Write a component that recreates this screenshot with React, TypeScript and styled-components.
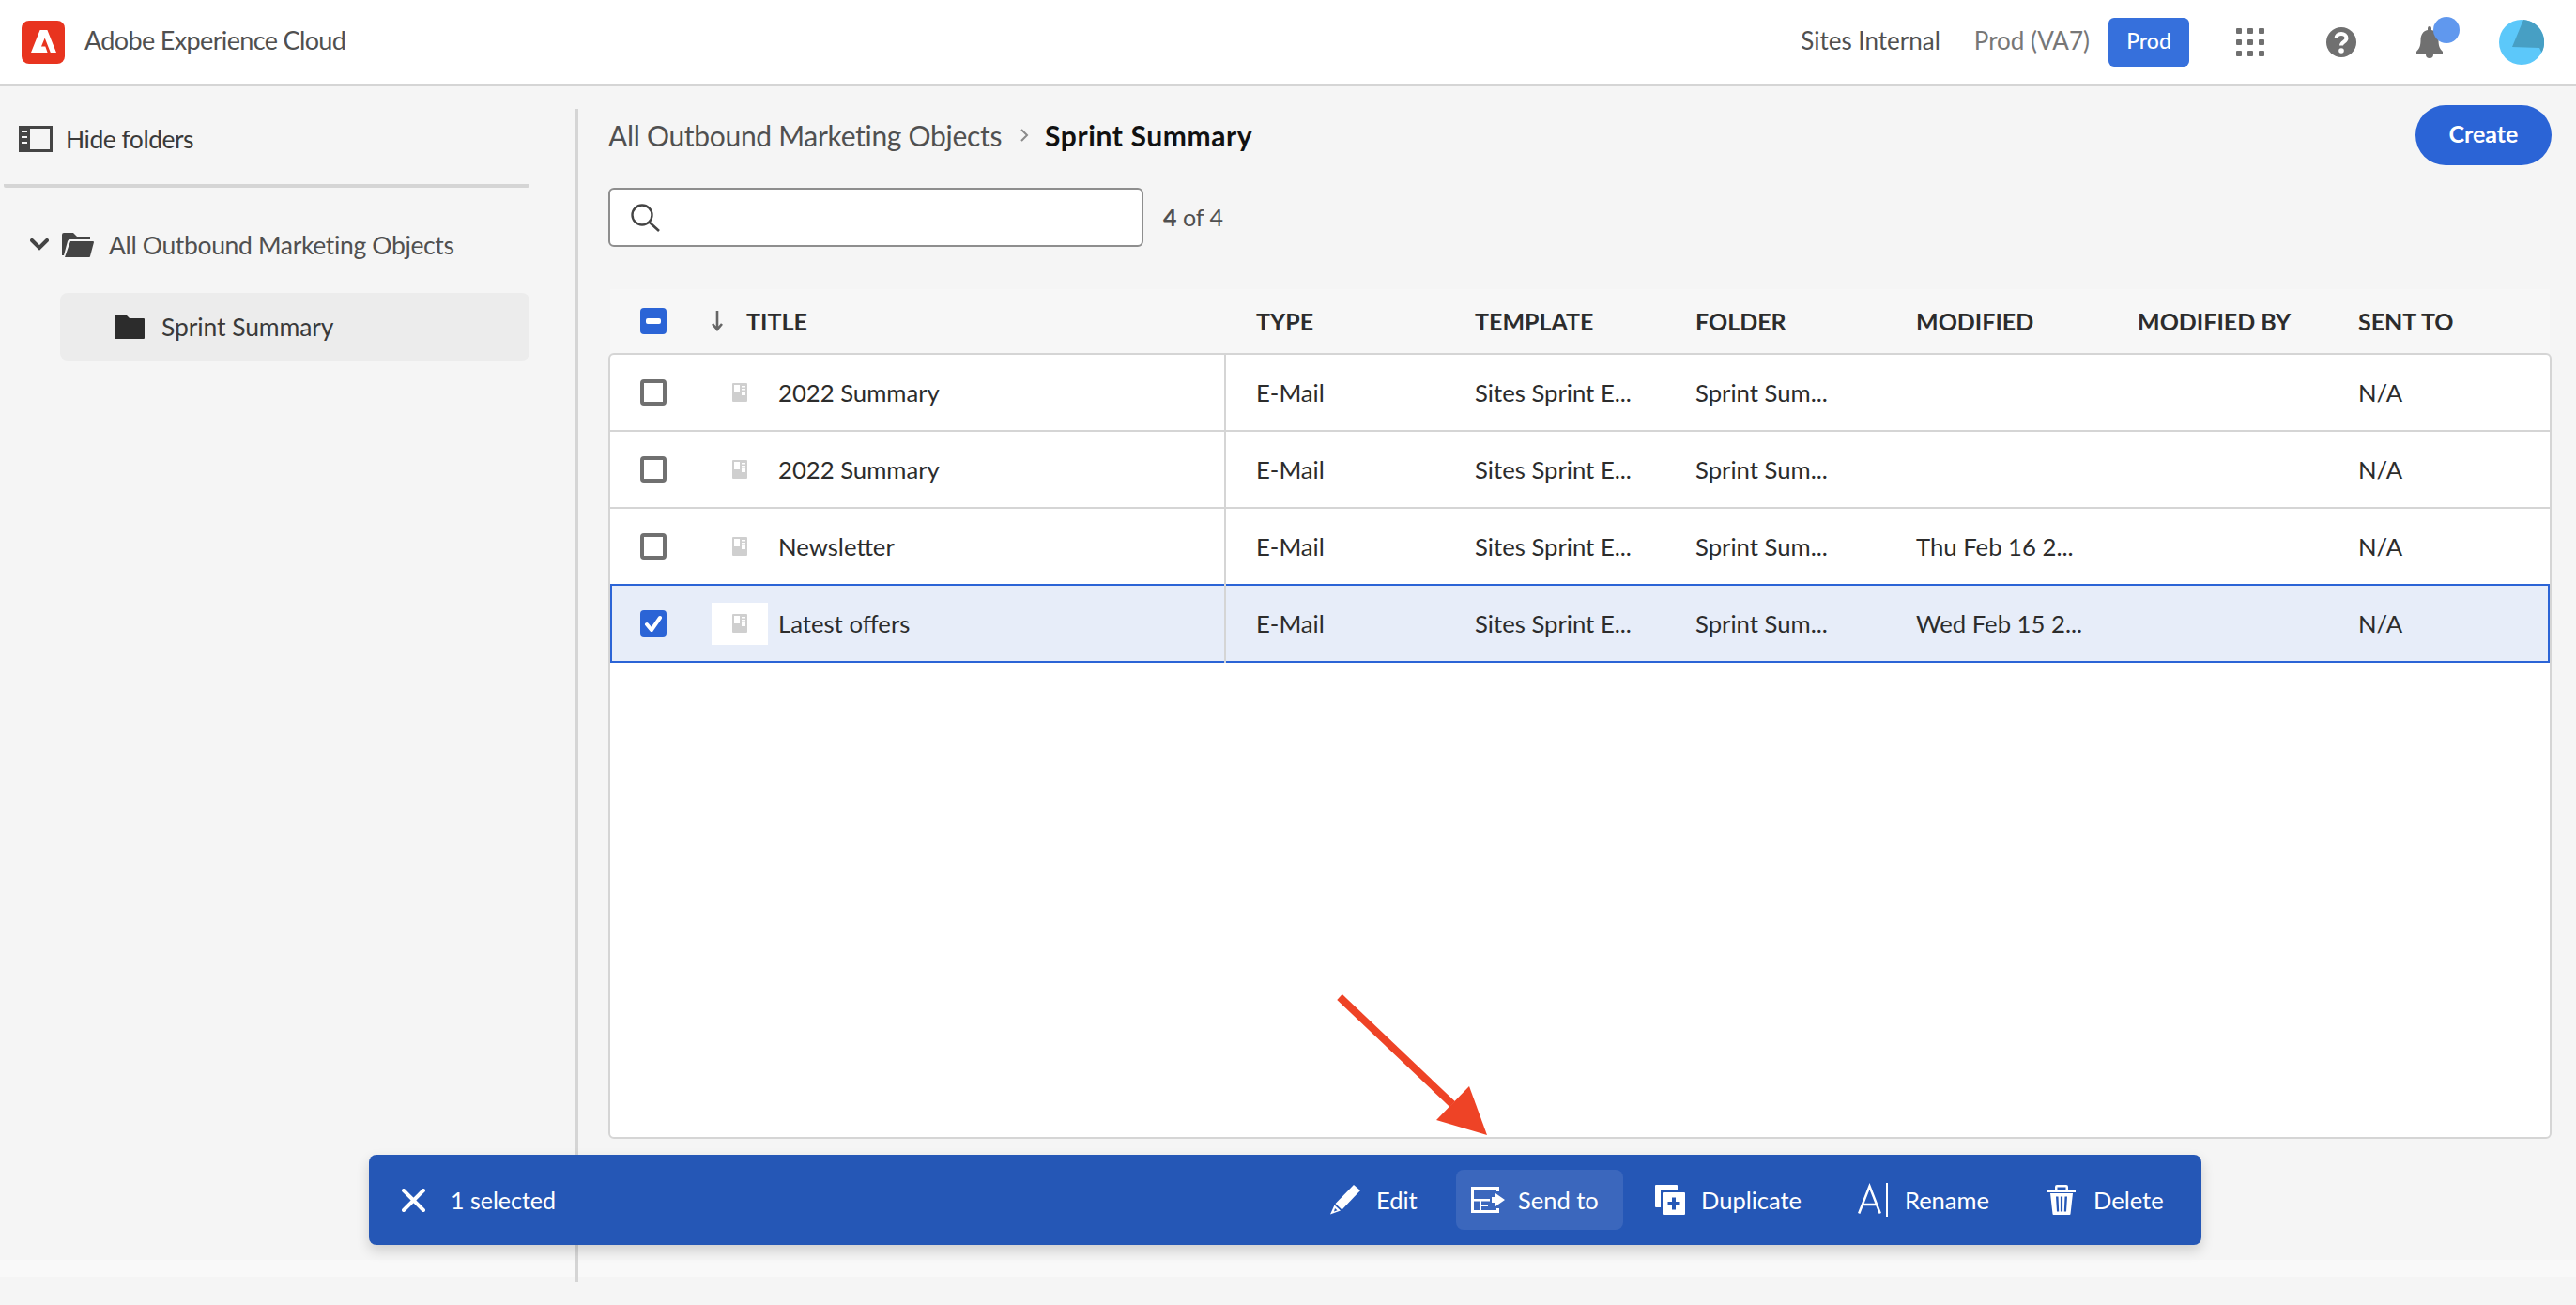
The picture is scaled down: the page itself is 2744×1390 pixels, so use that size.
import styled, { createGlobalStyle } from "styled-components";

const Global = createGlobalStyle`
  html, body { margin: 0; padding: 0; }
  body { font-family: "Lato", "Noto Sans", sans-serif; color: #2c2c2c; }
  * { box-sizing: border-box; }
`;

const Page = styled.div`
  position: relative;
  width: 2744px;
  height: 1390px;
  overflow: hidden;
  display: flex;
  flex-direction: column;
  background: linear-gradient(
    to bottom,
    #f5f5f5 1342px,
    #f9f9f9 1342px,
    #f9f9f9 1360px,
    #f5f5f5 1360px
  );
`;

const Header = styled.header`
  display: flex;
  align-items: center;
  height: 92px;
  flex: none;
  background: #fff;
  border-bottom: 2px solid #d5d5d5;
  padding: 0 34px 0 23px;
`;

const Logo = styled.div`
  width: 46px;
  height: 46px;
  border-radius: 8px;
  background: #e8341f;
  display: flex;
  align-items: center;
  justify-content: center;
  margin-right: 21px;
  padding-bottom: 2px;
`;

const Brand = styled.span`
  font-size: 27px;
  letter-spacing: -0.65px;
  color: #505050;
  flex: 1;
  padding-bottom: 5px;
`;

const HeaderText = styled.span<{ $muted?: boolean }>`
  font-size: 26px;
  color: ${(p) => (p.$muted ? "#777" : "#505050")};
  margin-right: ${(p) => (p.$muted ? "20px" : "36px")};
  padding-bottom: 5px;
`;

const ProdBadge = styled.div`
  width: 86px;
  height: 52px;
  border-radius: 6px;
  background: #3670dc;
  color: #fff;
  font-size: 23px;
  font-weight: 500;
  display: flex;
  align-items: center;
  justify-content: center;
  margin-right: 50px;
  padding-bottom: 4px;
`;

const HeaderIcons = styled.div`
  display: flex;
  align-items: center;
`;

const IconSlot = styled.div<{ $w: number; $mr: number }>`
  position: relative;
  width: ${(p) => p.$w}px;
  margin-right: ${(p) => p.$mr}px;
  display: flex;
  align-items: center;
`;

const Dot = styled.div`
  position: absolute;
  left: 18px;
  top: -10px;
  width: 28px;
  height: 28px;
  border-radius: 50%;
  background: #6098ee;
`;

const Body = styled.div`
  flex: 1;
  display: flex;
  padding-top: 24px;
  padding-bottom: 24px;
`;

const Sidebar = styled.aside`
  width: 612px;
  flex: none;
  padding-left: 4px;
  font-size: 26.5px;
  letter-spacing: -0.3px;
`;

const HideRow = styled.div`
  width: 560px;
  height: 84px;
  display: flex;
  align-items: center;
  gap: 14px;
  padding: 0 0 16px 16px;
  border-bottom: 4px solid #d5d5d5;
  border-radius: 0 0 2px 2px;
  letter-spacing: -0.5px;
  color: #3a3a3a;
`;

const TreeRoot = styled.div`
  display: flex;
  align-items: center;
  height: 72px;
  margin-top: 25px;
  padding-left: 28px;
  letter-spacing: -0.35px;
  color: #505050;
`;

const Chevron = styled.svg`
  margin-right: 14px;
`;

const OpenFolder = styled.svg`
  margin-right: 16px;
`;

const TreeChild = styled.div`
  display: flex;
  align-items: center;
  width: 500px;
  height: 72px;
  margin: 15px 0 0 60px;
  padding-left: 58px;
  gap: 18px;
  background: #ececec;
  border-radius: 8px;
  letter-spacing: -0.1px;
  color: #3a3a3a;
`;

const Main = styled.main`
  flex: 1;
  border-left: 4px solid #d5d5d5;
  padding-left: 32px;
  padding-right: 26px;
  display: flex;
  flex-direction: column;
`;

const TitleBar = styled.div`
  display: flex;
  align-items: center;
  height: 64px;
  font-size: 30px;
  margin-top: -4px;
`;

const Crumb = styled.span`
  color: #505050;
  letter-spacing: -0.3px;
`;

const CrumbSep = styled.svg`
  margin: 0 17px 0 19px;
`;

const CrumbBold = styled.span`
  color: #111;
  font-weight: 700;
  letter-spacing: 0.6px;
  flex: 1;
`;

const CreateButton = styled.button`
  width: 145px;
  height: 64px;
  border: 0;
  border-radius: 32px;
  background: #2b64d6;
  color: #fff;
  padding: 0 0 4px;
  font: 700 25px "Lato", sans-serif;
`;

const SearchRow = styled.div`
  display: flex;
  align-items: center;
  margin-top: 24px;
  gap: 21px;
`;

const SearchBox = styled.div`
  width: 570px;
  height: 63px;
  background: #fff;
  border: 2px solid #8e8e8e;
  border-radius: 6px;
  display: flex;
  align-items: center;
  padding-left: 22px;
`;

const Count = styled.span`
  font-size: 25px;
  color: #505050;
  padding-bottom: 2px;
  b {
    font-weight: 700;
  }
`;

const COLUMNS = "108px 580px 233px 235px 235px 236px 235px 1fr";

const HeadRow = styled.div`
  display: grid;
  grid-template-columns: ${COLUMNS};
  align-items: center;
  height: 68px;
  margin: 45px 2px 0;
  background: #f7f7f7;
  font-size: 25px;
  font-weight: 700;
  color: #2c2c2c;
`;

const TableCard = styled.div`
  height: 837px;
  background: #fff;
  border: 2px solid #d5d5d5;
  border-radius: 6px;
`;

const Row = styled.div<{ $selected?: boolean }>`
  display: grid;
  grid-template-columns: ${COLUMNS};
  align-items: stretch;
  font-size: 25.7px;
  color: #2c2c2c;
  height: 82px;
  border-bottom: 2px solid #d5d5d5;
  ${(p) =>
    p.$selected &&
    `
    height: 84px;
    margin-top: -2px;
    border-bottom: 0;
    background: #e7edf9;
    box-shadow: inset 0 0 0 2px #2b64d6;
  `}
`;

const Cell = styled.div`
  display: flex;
  align-items: center;
  white-space: nowrap;
`;

const CheckCell = styled(Cell)`
  padding-left: 32px;
`;

const TitleCell = styled(Cell)`
  border-right: 2px solid #d5d5d5;
  margin-right: 32px;
`;

const Thumb = styled.div<{ $white?: boolean }>`
  width: 60px;
  height: 45px;
  margin-right: 11px;
  display: flex;
  align-items: center;
  justify-content: center;
  background: ${(p) => (p.$white ? "#fff" : "transparent")};
`;

const HeadSort = styled.div`
  display: flex;
  align-items: center;
  gap: 25px;
`;

const Checkbox = styled.div<{ $on?: boolean }>`
  width: 28px;
  height: 28px;
  border-radius: 4px;
  display: flex;
  align-items: center;
  justify-content: center;
  background: ${(p) => (p.$on ? "#2b64d6" : "#fff")};
  border: ${(p) => (p.$on ? "0" : "4px solid #707070")};
`;

const ActionBar = styled.div`
  position: absolute;
  left: 393px;
  top: 1230px;
  width: 1952px;
  height: 96px;
  display: flex;
  align-items: center;
  background: #2557b6;
  border-radius: 8px;
  box-shadow: 0 6px 14px rgba(0, 0, 0, 0.16);
  color: #fff;
  font-size: 25.5px;
  padding: 0 20px 0 35px;
`;

const Selected = styled.span`
  margin-left: 27px;
  flex: 1;
  font-size: 25px;
`;

const Action = styled.div<{ $active?: boolean; $w: number; $gap?: number; $ml?: number }>`
  width: ${(p) => p.$w}px;
  height: 64px;
  margin-left: ${(p) => p.$ml ?? 0}px;
  display: flex;
  align-items: center;
  gap: ${(p) => p.$gap ?? 17}px;
  padding-left: 16px;
  border-radius: 8px;
  background: ${(p) => (p.$active ? "#3b67bd" : "transparent")};
`;

const Arrow = styled.svg`
  position: absolute;
  left: 1420px;
  top: 1055px;
`;

const rows = [
  { title: "2022 Summary", modified: "" },
  { title: "2022 Summary", modified: "" },
  { title: "Newsletter", modified: "Thu Feb 16 2..." },
  { title: "Latest offers", modified: "Wed Feb 15 2...", selected: true },
];

const ThumbIcon = () => (
  <svg width="16" height="20" viewBox="0 0 16 20">
    <path
      fill="#cfcfcf"
      fillRule="evenodd"
      d="M1 0h14a1 1 0 0 1 1 1v18a1 1 0 0 1-1 1H1a1 1 0 0 1-1-1V1a1 1 0 0 1 1-1zM2 2v8h6V2zm8 1v1.400h4V3zm0 3v1.400h4V6zm0 3v4h4V9z"
    />
  </svg>
);

export default function App() {
  return (
    <Page>
      <Global />
      <Header>
        <Logo>
          <svg width="27" height="24" viewBox="0 0 27 24">
            <path fill="#fff" d="M9.600 0h7.800L27 24h-6.200L14.700 8.500 11 17.500h4.300l2.300 6.500H0z" />
          </svg>
        </Logo>
        <Brand>Adobe Experience Cloud</Brand>
        <HeaderText>Sites Internal</HeaderText>
        <HeaderText $muted>Prod (VA7)</HeaderText>
        <ProdBadge>Prod</ProdBadge>
        <HeaderIcons>
          <IconSlot $w={30} $mr={66}>
            <svg width="30" height="30" viewBox="0 0 30 30" fill="#707070">
              {[0, 12, 24].flatMap((y) =>
                [0, 12, 24].map((x) => <rect key={`${x}-${y}`} x={x} y={y} width="6" height="6" rx="1" />)
              )}
            </svg>
          </IconSlot>
          <IconSlot $w={32} $mr={64}>
            <svg width="32" height="32" viewBox="0 0 32 32">
              <circle cx="16" cy="16" r="16" fill="#707070" />
              <path fill="none" stroke="#fff" strokeWidth="4" d="M10.500 12c0-3.300 2.500-5 5.500-5s5.500 1.800 5.500 4.800c0 3.800-5.500 3.700-5.500 7.700" />
              <circle cx="16" cy="25" r="2.800" fill="#fff" />
            </svg>
          </IconSlot>
          <IconSlot $w={28} $mr={60}>
            <svg width="28" height="34" viewBox="0 0 28 34" fill="#707070">
              <path d="M12 2a2 2 0 0 1 4 0v2c5 1 7.500 5 7.500 11 0 6 1.500 9 4.500 12v2H0v-2c3-3 4.500-6 4.500-12 0-6 2.500-10 7.500-11z" />
              <path d="M10 30h8a4 4 0 0 1-8 0z" />
            </svg>
            <Dot />
          </IconSlot>
          <svg width="48" height="48" viewBox="0 0 48 48">
            <circle cx="24" cy="24" r="24" fill="#5cc8fa" />
            <path fill="#479fc4" d="M26 .1 14 29l29 1 2.500 5A24 24 0 0 0 26 .1z" />
          </svg>
        </HeaderIcons>
      </Header>
      <Body>
        <Sidebar>
          <HideRow>
            <svg width="36" height="28" viewBox="0 0 36 28">
              <path fill="#444" fillRule="evenodd" d="M0 0h36v28H0zM12 3v22h21V3zM3 5v2h6V5zm0 6v2h6v-2zm0 6v2h6v-2z" />
            </svg>
            Hide folders
          </HideRow>
          <TreeRoot>
            <Chevron width="20" height="14" viewBox="0 0 20 14">
              <path fill="none" stroke="#444" strokeWidth="4" strokeLinecap="round" d="M2 2l8 8 8-8" />
            </Chevron>
            <OpenFolder width="34" height="26" viewBox="0 0 34 26">
              <path fill="#444" d="M0 2a2 2 0 0 1 2-2h10l4 4h14v3H9a3 3 0 0 0-3 2L2 24H0zM9 9h24a1 1 0 0 1 1 1l-4 15a1 1 0 0 1-1 1H3z" />
            </OpenFolder>
            All Outbound Marketing Objects
          </TreeRoot>
          <TreeChild>
            <svg width="32" height="26" viewBox="0 0 32 26">
              <path fill="#2c2c2c" d="M1 0h11l4 4h15a1 1 0 0 1 1 1v20a1 1 0 0 1-1 1H1a1 1 0 0 1-1-1V1a1 1 0 0 1 1-1z" />
            </svg>
            Sprint Summary
          </TreeChild>
        </Sidebar>
        <Main>
          <TitleBar>
            <Crumb>All Outbound Marketing Objects</Crumb>
            <CrumbSep width="10" height="16" viewBox="0 0 10 16">
              <path fill="none" stroke="#8a8a8a" strokeWidth="2" d="M2 2l6 6-6 6" />
            </CrumbSep>
            <CrumbBold>Sprint Summary</CrumbBold>
            <CreateButton>Create</CreateButton>
          </TitleBar>
          <SearchRow>
            <SearchBox>
              <svg width="32" height="30" viewBox="0 0 32 30">
                <circle cx="12" cy="12" r="10.500" fill="none" stroke="#444" strokeWidth="2.400" />
                <path stroke="#444" strokeWidth="2.600" d="M19.500 19.500L30 29" />
              </svg>
            </SearchBox>
            <Count>
              <b>4</b> of 4
            </Count>
          </SearchRow>
          <HeadRow>
            <CheckCell>
              <Checkbox $on>
                <svg width="16" height="6" viewBox="0 0 16 6">
                  <rect width="16" height="6" rx="2" fill="#fff" />
                </svg>
              </Checkbox>
            </CheckCell>
            <Cell>
              <HeadSort>
                <svg width="12" height="22" viewBox="0 0 12 22">
                  <path fill="none" stroke="#666" strokeWidth="2.600" d="M6 0v20M1 14l5 6 5-6" />
                </svg>
                TITLE
              </HeadSort>
            </Cell>
            <Cell>TYPE</Cell>
            <Cell>TEMPLATE</Cell>
            <Cell>FOLDER</Cell>
            <Cell>MODIFIED</Cell>
            <Cell>MODIFIED BY</Cell>
            <Cell>SENT TO</Cell>
          </HeadRow>
          <TableCard>
            {rows.map((r, i) => (
              <Row key={i} $selected={r.selected}>
                <CheckCell>
                  <Checkbox $on={r.selected}>
                    {r.selected && (
                      <svg width="20" height="18" viewBox="0 0 20 18">
                        <path fill="none" stroke="#fff" strokeWidth="4" strokeLinecap="round" d="M3 10l5 6L17 3" />
                      </svg>
                    )}
                  </Checkbox>
                </CheckCell>
                <TitleCell>
                  <Thumb $white={r.selected}>
                    <ThumbIcon />
                  </Thumb>
                  {r.title}
                </TitleCell>
                <Cell>E-Mail</Cell>
                <Cell>Sites Sprint E...</Cell>
                <Cell>Sprint Sum...</Cell>
                <Cell>{r.modified}</Cell>
                <Cell />
                <Cell>N/A</Cell>
              </Row>
            ))}
          </TableCard>
        </Main>
      </Body>
      <Arrow width="170" height="160" viewBox="0 0 170 160">
        <path stroke="#ee4326" strokeWidth="8" d="M7 7L127 121" />
        <path fill="#ee4326" d="M164 154L110 138 145 102z" />
      </Arrow>
      <ActionBar>
        <svg width="25" height="25" viewBox="0 0 25 25">
          <path stroke="#fff" strokeWidth="4" strokeLinecap="round" d="M2 2l21 21M23 2L2 23" />
        </svg>
        <Selected>1 selected</Selected>
        <Action $w={150}>
          <svg width="32" height="32" viewBox="0 0 32 32" fill="#fff">
            <path d="M25 0l7 6-19.500 20.500L5.500 20z" />
            <path fillRule="evenodd" d="M4.500 21.500L11 27.500 0 31.500zM5 25l-1 3.500 3.500-1.200z" />
          </svg>
          Edit
        </Action>
        <Action $w={178} $gap={14} $active>
          <svg width="36" height="28" viewBox="0 0 36 28" fill="#fff">
            <path
              fillRule="evenodd"
              d="M0 0H30V5H27V3H3V13H20V15.500H11V19H18V21H11V25H27V23H30V28H0ZM3 15.500H9V25H3Z"
            />
            <path d="M22 11h4V7l10 7-10 7v-4h-4z" />
          </svg>
          Send to
        </Action>
        <Action $w={216} $ml={18}>
          <svg width="32" height="32" viewBox="0 0 32 32" fill="#fff">
            <path d="M1 0h22a1 1 0 0 1 1 1v5H6v18H1a1 1 0 0 1-1-1V1a1 1 0 0 1 1-1z" />
            <path
              fillRule="evenodd"
              d="M9 8h22a1 1 0 0 1 1 1v22a1 1 0 0 1-1 1H9a1 1 0 0 1-1-1V9a1 1 0 0 1 1-1zM18 13.500v4.500h-4.500v4H18v4.500h4V22h4.500v-4H22v-4.500z"
            />
          </svg>
          Duplicate
        </Action>
        <Action $w={202} $gap={18}>
          <svg width="32" height="36" viewBox="0 0 32 36">
            <path fill="none" stroke="#fff" strokeWidth="2.500" d="M1.200 32.500L12.500 3.500l11.300 29M5 23h15" />
            <rect x="30" y="0" width="2" height="36" fill="#fff" />
          </svg>
          Rename
        </Action>
        <Action $w={160} $gap={19}>
          <svg width="30" height="32" viewBox="0 0 30 32" fill="#fff">
            <path fillRule="evenodd" d="M10 0h10a2 2 0 0 1 2 2v3h8v3H0V5h8V2a2 2 0 0 1 2-2zM10.500 2.500V5h9V2.500z" />
            <path
              fillRule="evenodd"
              d="M3 9h24l-2.500 22a1 1 0 0 1-1 1h-17a1 1 0 0 1-1-1zM9 12.500l1 16h2.200l-.7-16zM13.900 12.500v16h2.200v-16zM18.500 12.500l-.7 16H20l1-16z"
            />
          </svg>
          Delete
        </Action>
      </ActionBar>
    </Page>
  );
}
